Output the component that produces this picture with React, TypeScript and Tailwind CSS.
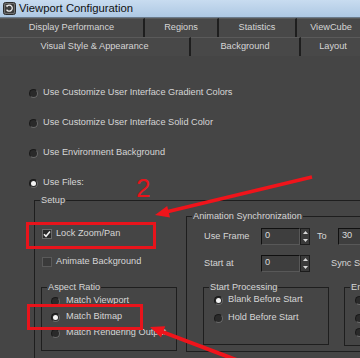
import React from "react";

const sans = "font-['Liberation_Sans',Arial,sans-serif]";

function Radio({ on = false }: { on?: boolean }) {
  return (
    <span className="inline-flex w-[9px] h-[9px] shrink-0 items-center justify-center rounded-full bg-[#2a2a2a] border border-[#1a1a1a] border-b-[#6a6a6a] border-r-[#6a6a6a]">
      {on && <span className="w-[5px] h-[5px] rounded-full bg-[#f4f4f4]" />}
    </span>
  );
}

function Check({ on = false }: { on?: boolean }) {
  return (
    <span
      className={`inline-flex w-[10px] h-[10px] shrink-0 items-center justify-center border ${
        on ? "bg-[#2a2a2a] border-[#6a6a6a]" : "bg-[#3a3a3a] border-[#5a5a5a]"
      }`}
    >
      {on && (
        <svg width="8" height="8" viewBox="0 0 8 8">
          <path d="M1 4.2L3 6.3L7 1.5" fill="none" stroke="#f2f2f2" strokeWidth="1.6" />
        </svg>
      )}
    </span>
  );
}

function Spin({ value, w }: { value: string; w: string }) {
  return (
    <div className="flex h-[17px]">
      <div className={`${w} h-full bg-[#3e3e3e] border border-[#101010] border-b-[#585858] border-r-[#585858] text-[#dcdcdc] pl-[3px] leading-[13px]`}>
        {value}
      </div>
      <div className="w-[10px] h-full flex flex-col bg-[#3a3a3a] border border-[#1c1c1c]">
        <span className="flex-1 flex items-center justify-center">
          <svg width="5" height="3" viewBox="0 0 5 3">
            <path d="M0 3L2.5 0L5 3z" fill="#d8d8d8" />
          </svg>
        </span>
        <span className="flex-1 flex items-center justify-center">
          <svg width="5" height="3" viewBox="0 0 5 3">
            <path d="M0 0L2.5 3L5 0z" fill="#d8d8d8" />
          </svg>
        </span>
      </div>
    </div>
  );
}

function Tab({ label, w }: { label: string; w: string }) {
  return (
    <div className={`${w} h-full shrink-0 flex items-center justify-center border-t border-[#5a5a5a] border-r-2 border-r-[#1e1e1e] bg-[#484848]`}>
      {label}
    </div>
  );
}

function RadioRow({ label, on = false }: { label: string; on?: boolean }) {
  return (
    <div className="h-[30px] flex items-center pl-[29px] gap-[5px]">
      <Radio on={on} />
      <span>{label}</span>
    </div>
  );
}

export default function App() {
  return (
    <div className={`${sans} relative w-[360px] h-[358px] overflow-hidden bg-[#454545] text-[9.2px] text-[#d6d6d6]`}>
      {/* title bar */}
      <div className="h-[18px] flex items-center pl-[3px] gap-[3px] bg-gradient-to-b from-[#c8dcf0] to-[#aec8e3] border-b border-[#6a7a8a]">
        <svg width="13" height="13" viewBox="0 0 13 13">
          <rect x="0.5" y="0.5" width="12" height="12" rx="2" fill="#6d6d6d" stroke="#2a2a2a" />
          <rect x="2" y="2" width="9" height="9" rx="1" fill="#3c3c3c" />
          <path d="M4 4.2A3 3 0 1 1 3.6 7.6" fill="none" stroke="#f0f0f0" strokeWidth="1.3" />
          <path d="M2.6 3.2L4.6 3.4L4.2 5.4z" fill="#f0f0f0" />
        </svg>
        <span className="text-[11.3px] text-[#111]">Viewport Configuration</span>
      </div>

      {/* tabs */}
      <div className="h-[19px] flex">
        <Tab label="Display Performance" w="w-[145px]" />
        <Tab label="Regions" w="w-[74px]" />
        <Tab label="Statistics" w="w-[78px]" />
        <Tab label="ViewCube" w="w-[70px]" />
      </div>
      <div className="h-[19px] flex">
        <Tab label="Visual Style & Appearance" w="w-[191px]" />
        <Tab label="Background" w="w-[110px]" />
        <Tab label="Layout" w="w-[66px]" />
      </div>

      {/* content */}
      <div className="pt-[22px]">
        <RadioRow label="Use Customize User Interface Gradient Colors" />
        <RadioRow label="Use Customize User Interface Solid Color" />
        <RadioRow label="Use Environment Background" />
        <RadioRow label="Use Files:" on />

        <fieldset className="-mt-[4px] ml-[34px] w-[340px] border border-[#1e1e1e] pb-[10px]">
          <legend className="ml-[5px] px-[1px] leading-[12px]">Setup</legend>
          <div className="flex items-start">
            {/* left column */}
            <div className="w-[151px] shrink-0">
              <div className="mt-[21px] h-[14px] flex items-center pl-[7px] gap-[4px]">
                <Check on />
                <span>Lock Zoom/Pan</span>
              </div>
              <div className="mt-[14px] h-[14px] flex items-center pl-[7px] gap-[4px]">
                <Check />
                <span>Animate Background</span>
              </div>
              <fieldset className="mt-[12px] ml-[6px] w-[136px] border border-[#1e1e1e] pb-[9px]">
                <legend className="ml-[5px] px-[1px] leading-[12px]">Aspect Ratio</legend>
                <div className="h-[16px] flex items-center pl-[9px] gap-[6px]">
                  <Radio />
                  <span>Match Viewport</span>
                </div>
                <div className="h-[16px] flex items-center pl-[9px] gap-[6px]">
                  <Radio on />
                  <span>Match Bitmap</span>
                </div>
                <div className="h-[16px] flex items-center pl-[9px] gap-[6px] whitespace-nowrap">
                  <Radio />
                  <span>Match Rendering Output</span>
                </div>
              </fieldset>
            </div>

            {/* animation synchronization */}
            <fieldset className="mt-[4px] w-[185px] shrink-0 border border-[#1e1e1e] pb-[5px]">
              <legend className="ml-[5px] px-[1px] leading-[12px]">Animation Synchronization</legend>
              <div className="mt-[6px] h-[17px] flex items-center pl-[17px] whitespace-nowrap">
                <span className="w-[57px] shrink-0">Use Frame</span>
                <Spin value="0" w="w-[39px]" />
                <span className="ml-[7px] w-[21px] shrink-0">To</span>
                <Spin value="30" w="w-[40px]" />
              </div>
              <div className="mt-[10px] h-[17px] flex items-center pl-[17px] whitespace-nowrap">
                <span className="w-[57px] shrink-0">Start at</span>
                <Spin value="0" w="w-[39px]" />
                <span className="ml-[21px]">Sync Start</span>
              </div>
              <div className="mt-[9px] flex items-start">
                <fieldset className="ml-[16px] w-[126px] shrink-0 border border-[#1e1e1e] pb-[19px]">
                  <legend className="ml-[5px] px-[1px] leading-[12px]">Start Processing</legend>
                  <div className="h-[14px] flex items-center pl-[10px] gap-[5px]">
                    <Radio on />
                    <span>Blank Before Start</span>
                  </div>
                  <div className="mt-[4px] h-[14px] flex items-center pl-[10px] gap-[5px]">
                    <Radio />
                    <span>Hold Before Start</span>
                  </div>
                </fieldset>
                <fieldset className="ml-[15px] w-[100px] shrink-0 border border-[#1e1e1e] pb-[6px]">
                  <legend className="ml-[5px] px-[1px] leading-[12px] whitespace-nowrap">End Processing</legend>
                  <div className="h-[14px] flex items-center pl-[10px] gap-[5px]">
                    <Radio />
                    <span>Blank After End</span>
                  </div>
                  <div className="mt-[4px] h-[14px] flex items-center pl-[10px] gap-[5px]">
                    <Radio />
                    <span>Hold After End</span>
                  </div>
                  <div className="h-[14px] flex items-center pl-[10px] gap-[5px]">
                    <Radio />
                    <span>Loop After End</span>
                  </div>
                </fieldset>
              </div>
            </fieldset>
          </div>
        </fieldset>
      </div>

      {/* annotations */}
      <span className="absolute left-[136px] top-[175px] text-[26px] leading-[26px] text-[#e8141b]">2</span>
      <div className="absolute left-[26px] top-[222px] w-[130px] h-[27px] border-[3px] border-[#e8141b]" />
      <div className="absolute left-[27px] top-[304px] w-[116px] h-[26px] border-[3px] border-[#e8141b]" />
      <svg className="absolute left-0 top-0" width="360" height="358" viewBox="0 0 360 358">
        <line x1="312" y1="177" x2="166" y2="212" stroke="#f0141b" strokeWidth="3.5" />
        <polygon points="155,215 170,217.6 167.2,205.9" fill="#f0141b" />
        <line x1="242" y1="362" x2="160" y2="331" stroke="#f0141b" strokeWidth="4" />
        <polygon points="150,327 165.2,326.2 161,337.4" fill="#f0141b" />
      </svg>
    </div>
  );
}
